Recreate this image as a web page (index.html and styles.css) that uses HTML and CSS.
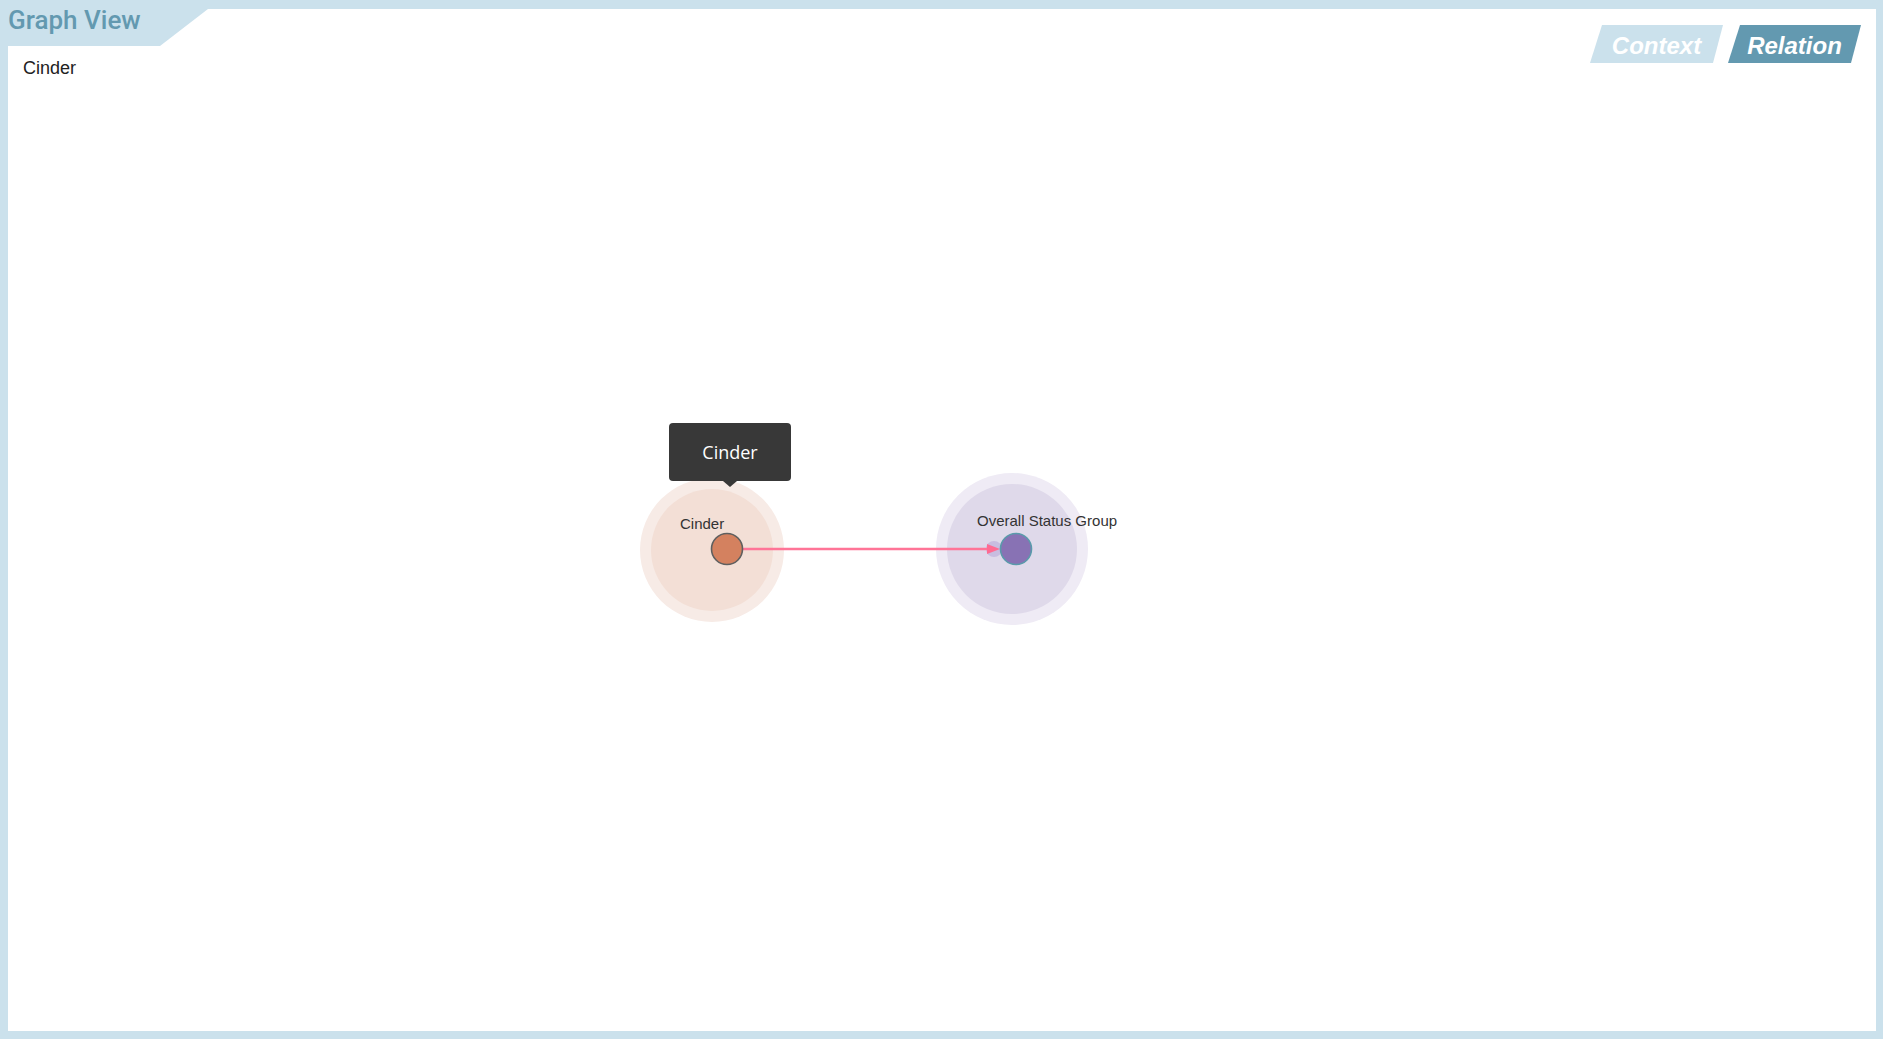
FILE: index.html
```html
<!DOCTYPE html>
<html>
<head>
<meta charset="utf-8">
<link rel="stylesheet" href="styles.css">
</head>
<body>
<div class="frame">
  <div class="tab"><span class="tab-title">Graph View</span></div>
  <div class="panel">
    <div class="crumb">Cinder</div>
    <div class="switch">
      <button class="sw sw-context"><span>Context</span></button>
      <button class="sw sw-relation"><span>Relation</span></button>
    </div>
    <svg class="graph" viewBox="0 0 1868 1022" width="1868" height="1022">
      <circle cx="704" cy="541" r="72" fill="#f7ebe6"/>
      <circle cx="704" cy="541" r="61" fill="#f3dfd6"/>
      <circle cx="1004" cy="540" r="76" fill="#efebf5"/>
      <circle cx="1004" cy="540" r="65" fill="#dfd9ea"/>
      <text x="672" y="520" class="nlabel">Cinder</text>
      <text x="969" y="517" class="nlabel">Overall Status Group</text>
      <circle cx="986" cy="540" r="8" fill="#c8bde0"/>
      <line x1="735" y1="540" x2="982" y2="540" stroke="#ff7497" stroke-width="2.5"/>
      <polygon points="979,535 992,540 979,545" fill="#ff6b92"/>
      <circle cx="719" cy="540" r="15.5" fill="#d4815f" stroke="#5f5f5f" stroke-width="1.6"/>
      <circle cx="1008" cy="540" r="15.5" fill="#8872b4" stroke="#5a9aab" stroke-width="1.6"/>
    </svg>
    <div class="tooltip">Cinder</div>
  </div>
</div>
</body>
</html>
```

FILE: styles.css
```css
html, body {
  margin: 0;
  padding: 0;
  width: 1883px;
  height: 1039px;
  overflow: hidden;
  background: #cbe1ec;
}
.frame {
  position: relative;
  box-sizing: border-box;
  width: 1883px;
  height: 1039px;
  padding: 9px 7px 8px 8px;
  display: flex;
}
.panel {
  position: relative;
  flex: 1;
  background: #ffffff;
}
.tab {
  position: absolute;
  left: 0;
  top: 0;
  width: 208px;
  height: 46px;
  background: #cbe1ec;
  clip-path: polygon(0 0, 100% 0, 100% 9px, 160px 46px, 0 46px);
  z-index: 2;
}
.tab-title {
  display: block;
  padding: 6px 0 0 8px;
  font-family: Roboto, "Liberation Sans", sans-serif;
  font-weight: 500;
  font-size: 26px;
  line-height: 28px;
  color: #6399b0;
}
.crumb {
  padding: 49px 0 0 15px;
  font-family: "Liberation Sans", Arial, sans-serif;
  font-size: 18px;
  line-height: 21px;
  color: #222222;
}
.switch {
  position: absolute;
  top: 16px;
  right: 15px;
  display: flex;
  gap: 5px;
  z-index: 2;
}
.sw {
  border: 0;
  padding: 0;
  margin: 0;
  width: 133px;
  height: 38px;
  display: flex;
  align-items: center;
  justify-content: center;
  font-family: "Liberation Sans", Arial, sans-serif;
  font-weight: bold;
  font-style: italic;
  font-size: 24px;
  color: #ffffff;
  clip-path: polygon(12px 0, 100% 0, calc(100% - 10px) 100%, 0 100%);
}
.sw span { padding-top: 3px; }
.sw-context { background: #cbe1ec; }
.sw-relation { background: #6399b0; }
.graph {
  position: absolute;
  left: 0;
  top: 0;
}
.nlabel {
  font-family: "Liberation Sans", Arial, sans-serif;
  font-size: 15px;
  fill: #333333;
}
.tooltip {
  position: absolute;
  left: 661px;
  top: 414px;
  width: 122px;
  height: 58px;
  box-sizing: border-box;
  background: #383838;
  border-radius: 4px;
  color: #ffffff;
  font-family: "Open Sans", sans-serif;
  font-size: 18px;
  display: flex;
  align-items: center;
  justify-content: center;
}
.tooltip::after {
  content: "";
  position: absolute;
  left: 54px;
  bottom: -6px;
  border-left: 7px solid transparent;
  border-right: 7px solid transparent;
  border-top: 6px solid #383838;
}
```
